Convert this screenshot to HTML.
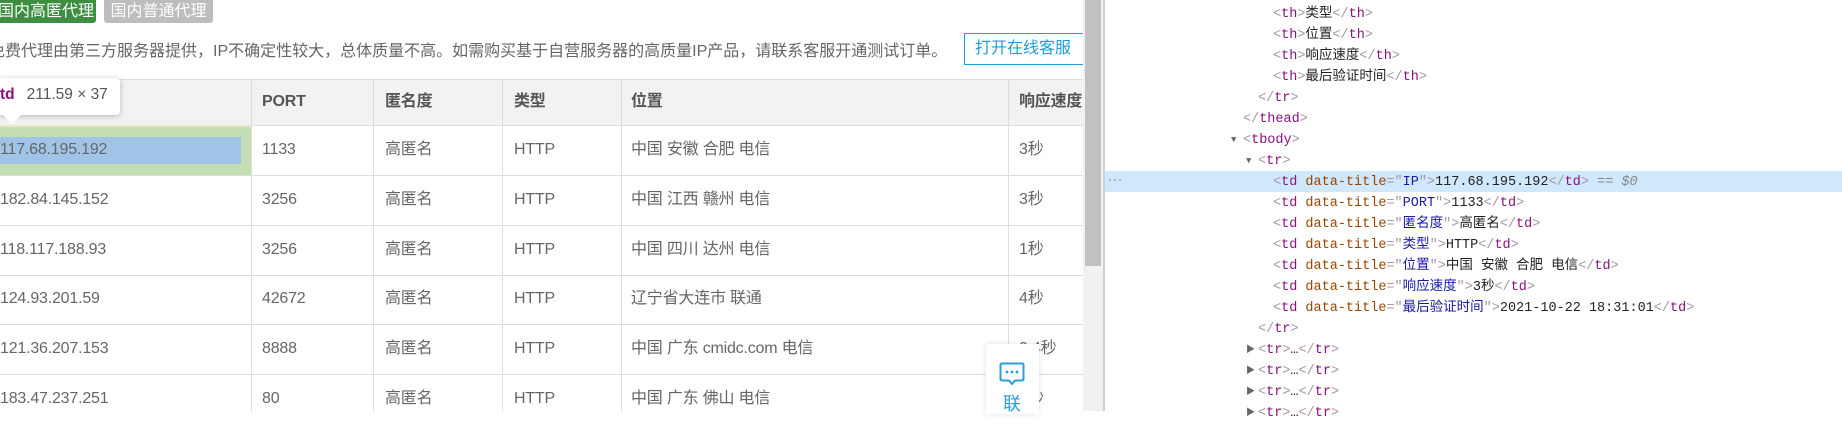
<!DOCTYPE html>
<html><head><meta charset="utf-8"><style>
*{margin:0;padding:0;box-sizing:border-box}
body{width:1842px;height:411px;overflow:hidden;background:#fff;position:relative;font-family:"Liberation Sans","Noto Sans CJK SC",sans-serif}
.a{position:absolute;white-space:nowrap}
.tab{position:absolute;top:0;height:23px;border-radius:0 0 3px 3px;color:#fff;font-size:16px;line-height:23px}
.hl{position:absolute;height:1px;background:#ddd;left:0;width:1083px}
.vl{position:absolute;width:1px;background:#ddd;top:79px;height:332px}
.c{position:absolute;font-size:16px;line-height:18px;height:18px;color:#666;white-space:nowrap;letter-spacing:-0.2px}
.th{font-weight:bold;color:#555}
.dt{position:absolute;left:1105px;top:3.5px;right:0;font-family:"Liberation Mono","Noto Sans CJK SC",monospace;font-size:13.5px;line-height:21px;color:#222}
.dt div{white-space:nowrap;height:21px;line-height:21px;position:relative}
.t{color:#881280}.b{color:#a894a6}.n{color:#994500}.v{color:#1a1aa6}
.tri{position:absolute;font-size:9px;color:#666}
</style></head><body>
<div class="tab" style="left:-6px;width:102px;background:#3e8e41;padding-left:4px">国内高匿代理</div>
<div class="tab" style="left:104px;width:109px;background:#bdbdbd;text-align:center">国内普通代理</div>
<div class="a" style="left:-11px;top:41px;font-size:16px;color:#666;line-height:22px">免费代理由第三方服务器提供，IP不确定性较大，总体质量不高。如需购买基于自营服务器的高质量IP产品，请联系客服开通测试订单。</div>
<div class="a" style="left:964px;top:33px;width:130px;height:32px;border:1px solid #1e9bd7;color:#1e9bd7;font-size:16px;line-height:30px;padding-left:10px">打开在线客服</div>

<div class="a" style="left:0;top:79px;width:1083px;height:46px;background:#f2f2f2"></div>
<div class="hl" style="top:79px"></div>
<div class="hl" style="top:125px"></div><div class="hl" style="top:175px"></div><div class="hl" style="top:225px"></div><div class="hl" style="top:275px"></div><div class="hl" style="top:324px"></div><div class="hl" style="top:374px"></div>
<div class="vl" style="left:251px"></div><div class="vl" style="left:373px"></div><div class="vl" style="left:502px"></div><div class="vl" style="left:621px"></div><div class="vl" style="left:1008px"></div>

<div class="a" style="left:0;top:126px;width:251px;height:49px;background:#c4deb4"></div>
<div class="a" style="left:0;top:125px;width:251px;height:2px;background:#efe6c4"></div>
<div class="a" style="left:0;top:137px;width:241px;height:27px;background:#9fc4e8"></div>

<div class="c th" style="left:262px;top:93px">PORT</div><div class="c th" style="left:385px;top:93px">匿名度</div><div class="c th" style="left:514px;top:93px">类型</div><div class="c th" style="left:631px;top:93px">位置</div><div class="c th" style="left:1019px;top:93px">响应速度</div>

<div class="c" style="left:0;top:141px">117.68.195.192</div><div class="c" style="left:262px;top:141px">1133</div><div class="c" style="left:385px;top:141px">高匿名</div><div class="c" style="left:514px;top:141px">HTTP</div><div class="c" style="left:631px;top:141px">中国 安徽 合肥 电信</div><div class="c" style="left:1019px;top:141px">3秒</div>
<div class="c" style="left:0;top:191px">182.84.145.152</div><div class="c" style="left:262px;top:191px">3256</div><div class="c" style="left:385px;top:191px">高匿名</div><div class="c" style="left:514px;top:191px">HTTP</div><div class="c" style="left:631px;top:191px">中国 江西 赣州 电信</div><div class="c" style="left:1019px;top:191px">3秒</div>
<div class="c" style="left:0;top:241px">118.117.188.93</div><div class="c" style="left:262px;top:241px">3256</div><div class="c" style="left:385px;top:241px">高匿名</div><div class="c" style="left:514px;top:241px">HTTP</div><div class="c" style="left:631px;top:241px">中国 四川 达州 电信</div><div class="c" style="left:1019px;top:241px">1秒</div>
<div class="c" style="left:0;top:290px">124.93.201.59</div><div class="c" style="left:262px;top:290px">42672</div><div class="c" style="left:385px;top:290px">高匿名</div><div class="c" style="left:514px;top:290px">HTTP</div><div class="c" style="left:631px;top:290px">辽宁省大连市 联通</div><div class="c" style="left:1019px;top:290px">4秒</div>
<div class="c" style="left:0;top:340px">121.36.207.153</div><div class="c" style="left:262px;top:340px">8888</div><div class="c" style="left:385px;top:340px">高匿名</div><div class="c" style="left:514px;top:340px">HTTP</div><div class="c" style="left:631px;top:340px">中国 广东 cmidc.com 电信</div><div class="c" style="left:1019px;top:340px">0.4秒</div>
<div class="c" style="left:0;top:390px">183.47.237.251</div><div class="c" style="left:262px;top:390px">80</div><div class="c" style="left:385px;top:390px">高匿名</div><div class="c" style="left:514px;top:390px">HTTP</div><div class="c" style="left:631px;top:390px">中国 广东 佛山 电信</div><div class="c" style="left:1019px;top:390px">3秒</div>

<div class="a" style="left:0;top:78px;width:120px;height:37px;background:#fff;border-radius:0 4px 4px 0;box-shadow:0 1px 6px rgba(0,0,0,.25)"></div>
<div class="a" style="left:3px;top:115px;width:0;height:0;border-left:9px solid transparent;border-right:9px solid transparent;border-top:9px solid #fff"></div>
<div class="a" style="left:0;top:86px;font-size:15.5px;line-height:18px"><b style="color:#881280">td</b><span style="color:#555;margin-left:12px">211.59 × 37</span></div>

<div class="a" style="left:986px;top:344px;width:53px;height:70px;background:#fff;box-shadow:0 0 6px rgba(0,0,0,.12)"></div>
<svg class="a" style="left:999px;top:362px" width="26" height="25" viewBox="0 0 26 25"><path d="M3 1.5h20a1.5 1.5 0 0 1 1.5 1.5v14a1.5 1.5 0 0 1-1.5 1.5h-7l-3 3.5-3-3.5h-7a1.5 1.5 0 0 1-1.5-1.5v-14a1.5 1.5 0 0 1 1.5-1.5z" fill="none" stroke="#2a9fd8" stroke-width="2"/><circle cx="8" cy="10" r="1.4" fill="#2a9fd8"/><circle cx="13" cy="10" r="1.4" fill="#2a9fd8"/><circle cx="18" cy="10" r="1.4" fill="#2a9fd8"/></svg>
<div class="a" style="left:1003px;top:394px;font-size:18px;color:#2a9fd8;line-height:20px">联</div>

<div class="a" style="left:1083px;top:0;width:20px;height:411px;background:#f1f1f1"></div>
<div class="a" style="left:1085px;top:0;width:16px;height:266px;background:#c1c1c1"></div>
<div class="a" style="left:1103px;top:0;width:2px;height:411px;background:#d0d0d0"></div>

<div class="a" style="left:1105px;top:171px;width:737px;height:21px;background:#cfe8fc"></div>
<div class="a" style="left:1108px;top:172px;font-size:12px;color:#666;letter-spacing:1px">···</div>

<div class="dt">
<div style="padding-left:168px"><span class="b">&lt;</span><span class="t">th</span><span class="b">&gt;</span>类型<span class="b">&lt;/</span><span class="t">th</span><span class="b">&gt;</span></div>
<div style="padding-left:168px"><span class="b">&lt;</span><span class="t">th</span><span class="b">&gt;</span>位置<span class="b">&lt;/</span><span class="t">th</span><span class="b">&gt;</span></div>
<div style="padding-left:168px"><span class="b">&lt;</span><span class="t">th</span><span class="b">&gt;</span>响应速度<span class="b">&lt;/</span><span class="t">th</span><span class="b">&gt;</span></div>
<div style="padding-left:168px"><span class="b">&lt;</span><span class="t">th</span><span class="b">&gt;</span>最后验证时间<span class="b">&lt;/</span><span class="t">th</span><span class="b">&gt;</span></div>
<div style="padding-left:153px"><span class="b">&lt;/</span><span class="t">tr</span><span class="b">&gt;</span></div>
<div style="padding-left:138px"><span class="b">&lt;/</span><span class="t">thead</span><span class="b">&gt;</span></div>
<div style="padding-left:138px"><span class="tri" style="left:126px">▼</span><span class="b">&lt;</span><span class="t">tbody</span><span class="b">&gt;</span></div>
<div style="padding-left:153px"><span class="tri" style="left:141px">▼</span><span class="b">&lt;</span><span class="t">tr</span><span class="b">&gt;</span></div>
<div style="padding-left:168px"><span class="b">&lt;</span><span class="t">td</span> <span class="n">data-title</span><span class="b">="</span><span class="v">IP</span><span class="b">"&gt;</span>117.68.195.192<span class="b">&lt;/</span><span class="t">td</span><span class="b">&gt;</span> <span style="color:#888">== <i>$0</i></span></div>
<div style="padding-left:168px"><span class="b">&lt;</span><span class="t">td</span> <span class="n">data-title</span><span class="b">="</span><span class="v">PORT</span><span class="b">"&gt;</span>1133<span class="b">&lt;/</span><span class="t">td</span><span class="b">&gt;</span></div>
<div style="padding-left:168px"><span class="b">&lt;</span><span class="t">td</span> <span class="n">data-title</span><span class="b">="</span><span class="v">匿名度</span><span class="b">"&gt;</span>高匿名<span class="b">&lt;/</span><span class="t">td</span><span class="b">&gt;</span></div>
<div style="padding-left:168px"><span class="b">&lt;</span><span class="t">td</span> <span class="n">data-title</span><span class="b">="</span><span class="v">类型</span><span class="b">"&gt;</span>HTTP<span class="b">&lt;/</span><span class="t">td</span><span class="b">&gt;</span></div>
<div style="padding-left:168px"><span class="b">&lt;</span><span class="t">td</span> <span class="n">data-title</span><span class="b">="</span><span class="v">位置</span><span class="b">"&gt;</span>中国 安徽 合肥 电信<span class="b">&lt;/</span><span class="t">td</span><span class="b">&gt;</span></div>
<div style="padding-left:168px"><span class="b">&lt;</span><span class="t">td</span> <span class="n">data-title</span><span class="b">="</span><span class="v">响应速度</span><span class="b">"&gt;</span>3秒<span class="b">&lt;/</span><span class="t">td</span><span class="b">&gt;</span></div>
<div style="padding-left:168px"><span class="b">&lt;</span><span class="t">td</span> <span class="n">data-title</span><span class="b">="</span><span class="v">最后验证时间</span><span class="b">"&gt;</span>2021-10-22 18:31:01<span class="b">&lt;/</span><span class="t">td</span><span class="b">&gt;</span></div>
<div style="padding-left:153px"><span class="b">&lt;/</span><span class="t">tr</span><span class="b">&gt;</span></div>
<div style="padding-left:153px"><span class="tri" style="left:141px">▶</span><span class="b">&lt;</span><span class="t">tr</span><span class="b">&gt;</span>…<span class="b">&lt;/</span><span class="t">tr</span><span class="b">&gt;</span></div>
<div style="padding-left:153px"><span class="tri" style="left:141px">▶</span><span class="b">&lt;</span><span class="t">tr</span><span class="b">&gt;</span>…<span class="b">&lt;/</span><span class="t">tr</span><span class="b">&gt;</span></div>
<div style="padding-left:153px"><span class="tri" style="left:141px">▶</span><span class="b">&lt;</span><span class="t">tr</span><span class="b">&gt;</span>…<span class="b">&lt;/</span><span class="t">tr</span><span class="b">&gt;</span></div>
<div style="padding-left:153px"><span class="tri" style="left:141px">▶</span><span class="b">&lt;</span><span class="t">tr</span><span class="b">&gt;</span>…<span class="b">&lt;/</span><span class="t">tr</span><span class="b">&gt;</span></div>
</div>
</body></html>
